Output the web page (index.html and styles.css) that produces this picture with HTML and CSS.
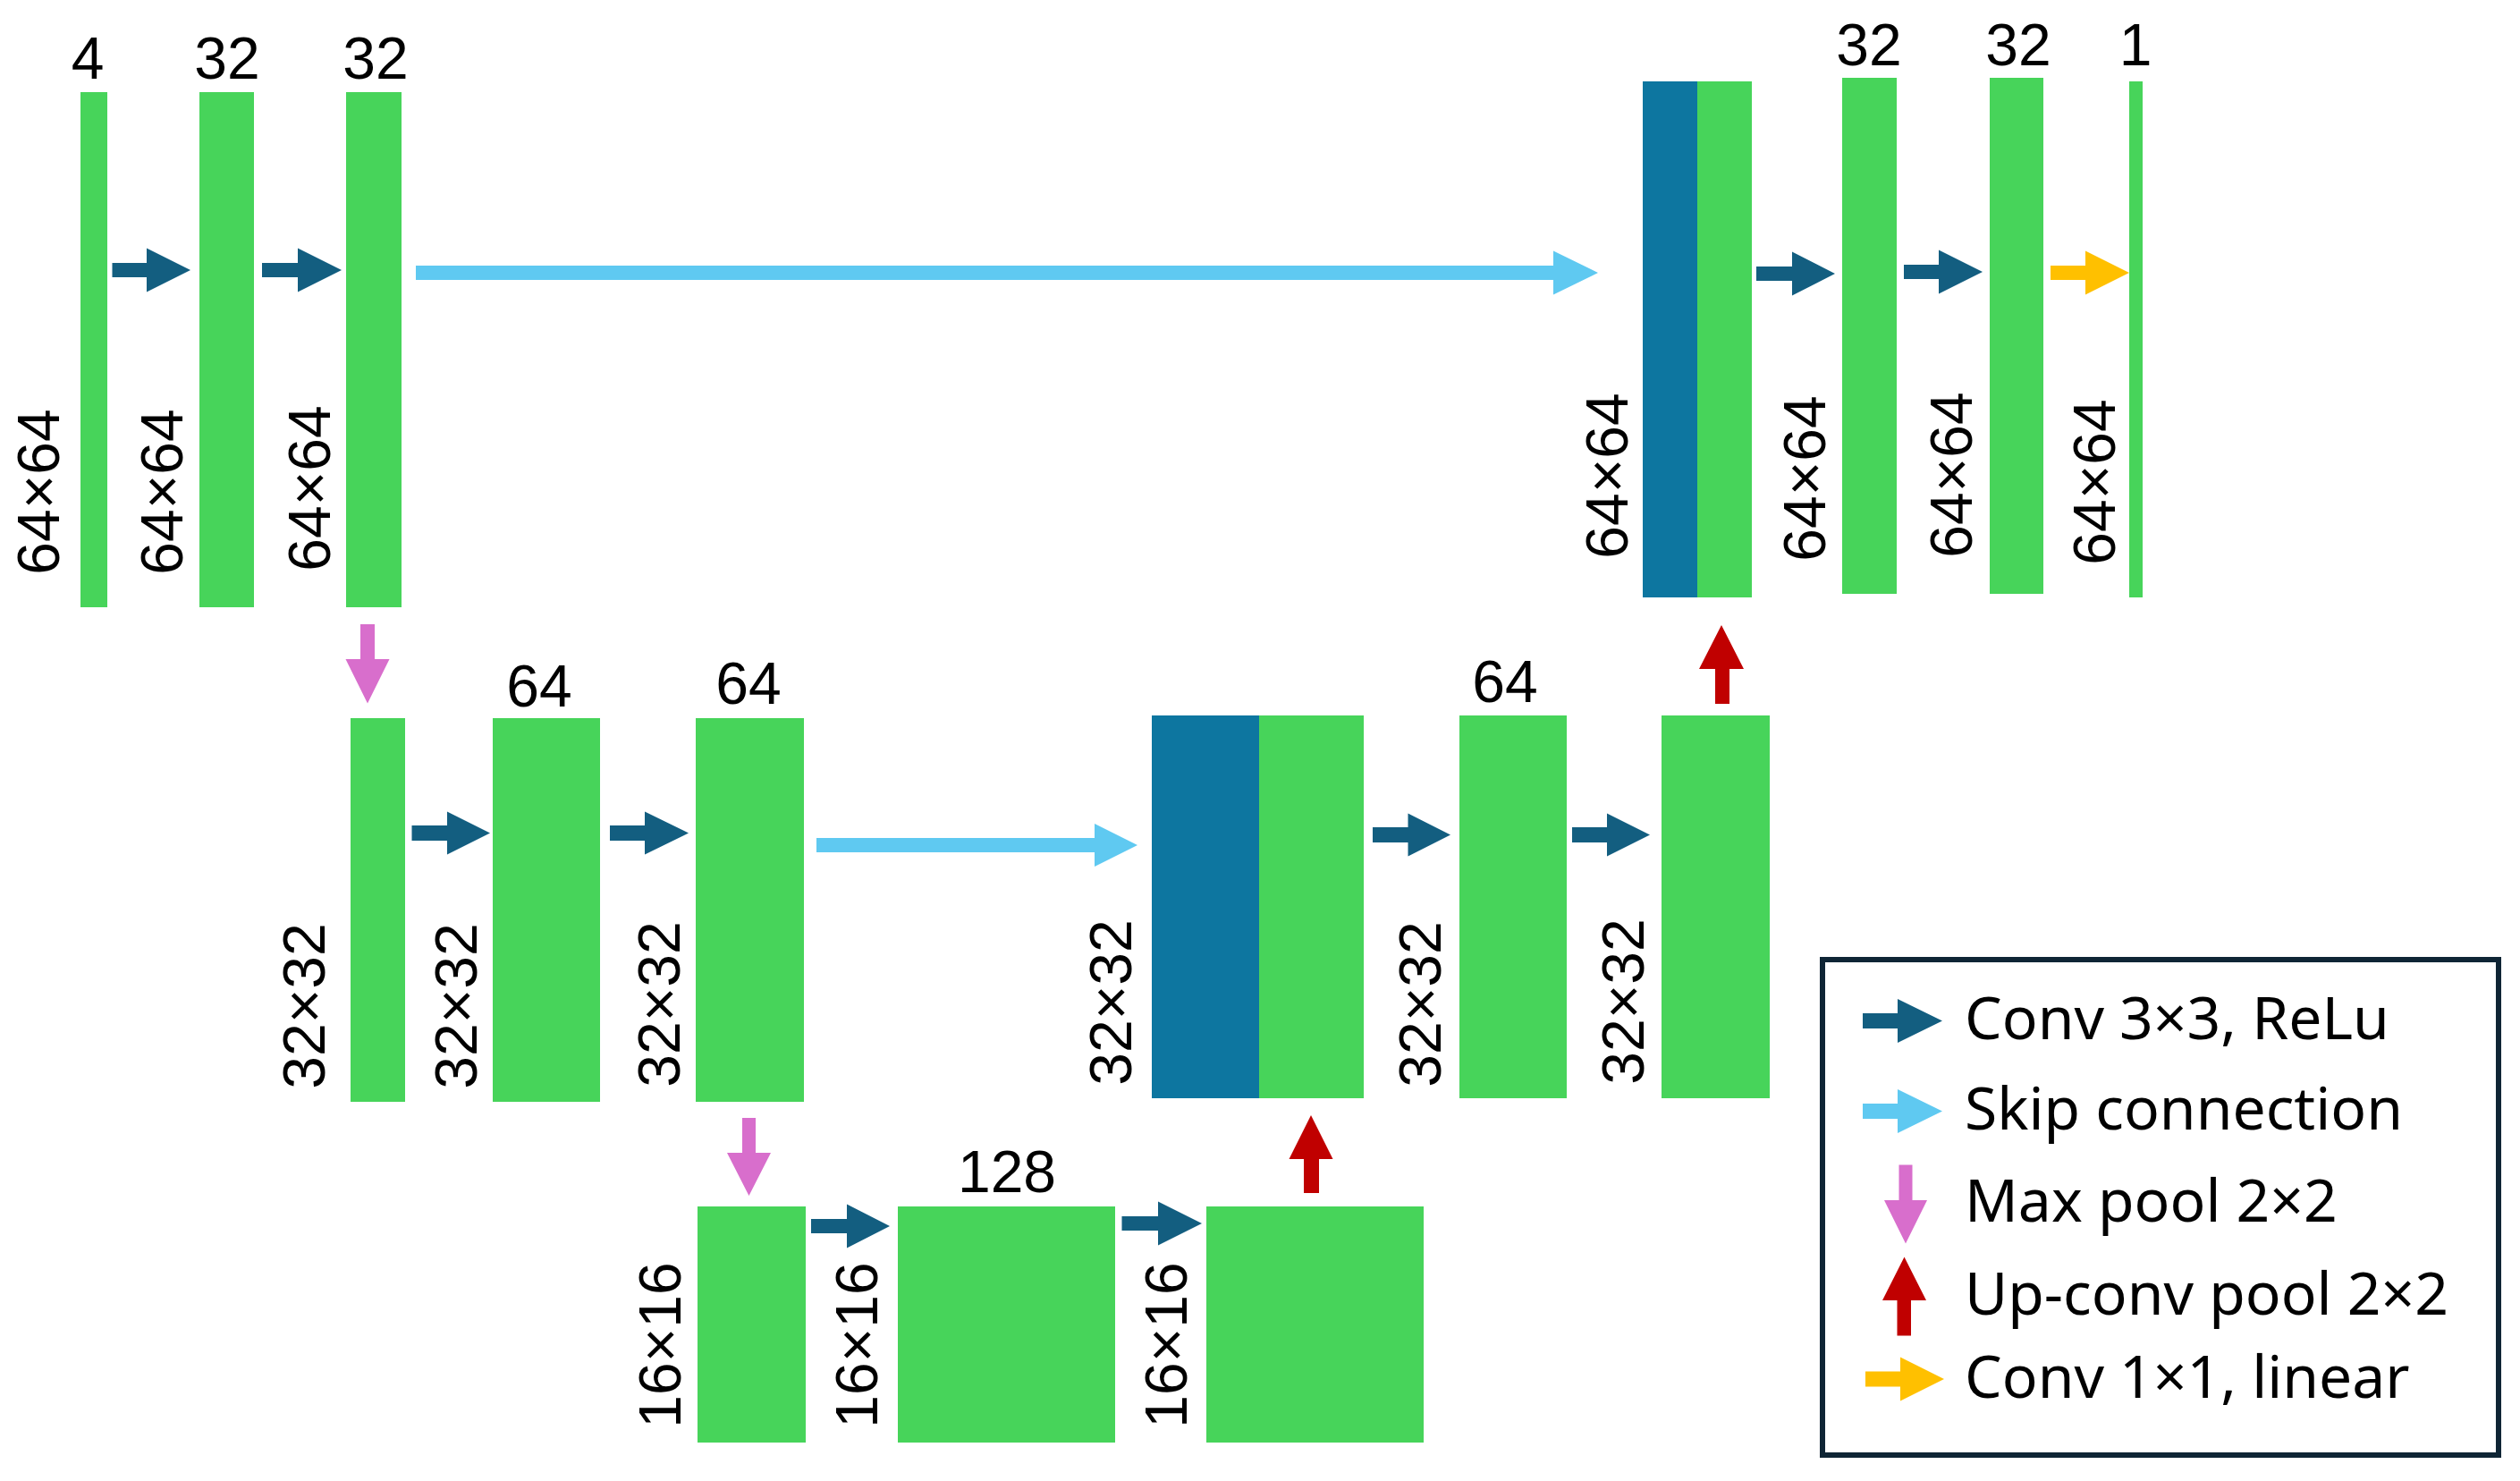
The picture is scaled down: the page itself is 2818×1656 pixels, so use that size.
FILE: index.html
```html
<!DOCTYPE html>
<html lang="en">
<head>
<meta charset="utf-8">
<title>U-Net architecture</title>
<link rel="stylesheet" href="styles.css">
</head>
<body>
<div class="canvas">
  <svg class="diagram" width="2818" height="1656" viewBox="0 0 2818 1656" xmlns="http://www.w3.org/2000/svg">
    <!-- level 1 encoder -->
    <rect class="g" x="90" y="103" width="30" height="576"/>
    <rect class="g" x="223" y="103" width="61" height="576"/>
    <rect class="g" x="387" y="103" width="62" height="576"/>
    <text class="lbl" x="98" y="88">4</text>
    <text class="lbl" x="254" y="88">32</text>
    <text class="lbl" x="420" y="88">32</text>
    <text class="lbl" transform="translate(66 550) rotate(-90)">64×64</text>
    <text class="lbl" transform="translate(204 550) rotate(-90)">64×64</text>
    <text class="lbl" transform="translate(369 546) rotate(-90)">64×64</text>
    <path class="conv" d="M125.5 294 H164 V277.5 L213 302 L164 326.5 V310 H125.5 Z"/>
    <path class="conv" d="M293 294 H333 V277.5 L382 302 L333 326.5 V310 H293 Z"/>
    <path class="skip" d="M465 297 H1737 V280.5 L1787 305 L1737 329.5 V313 H465 Z"/>

    <!-- level 1 decoder -->
    <rect class="b" x="1837" y="91" width="61" height="577"/>
    <rect class="g" x="1898" y="91" width="61" height="577"/>
    <rect class="g" x="2060" y="87" width="61" height="577"/>
    <rect class="g" x="2225" y="87" width="60" height="577"/>
    <rect class="g" x="2381" y="91" width="15" height="577"/>
    <text class="lbl" x="2090" y="73">32</text>
    <text class="lbl" x="2257" y="73">32</text>
    <text class="lbl" x="2388" y="73">1</text>
    <text class="lbl" transform="translate(1820 532) rotate(-90)">64×64</text>
    <text class="lbl" transform="translate(2041 535) rotate(-90)">64×64</text>
    <text class="lbl" transform="translate(2205 531) rotate(-90)">64×64</text>
    <text class="lbl" transform="translate(2365 539) rotate(-90)">64×64</text>
    <path class="conv" d="M1964 298 H2004 V281.5 L2052 306 L2004 330.5 V314 H1964 Z"/>
    <path class="conv" d="M2129 296 H2168 V279.5 L2217 304 L2168 328.5 V312 H2129 Z"/>
    <path class="lin" d="M2293 297 H2332 V280.5 L2381 305 L2332 329.5 V313 H2293 Z"/>
    <path class="up" d="M1918 787 V748 H1900 L1925 699 L1950 748 H1934 V787 Z"/>

    <!-- level 2 encoder -->
    <path class="pool" d="M403 698 V737 H386.5 L411 786.5 L435.5 737 H419 V698 Z"/>
    <rect class="g" x="392" y="803" width="61" height="429"/>
    <rect class="g" x="551" y="803" width="120" height="429"/>
    <rect class="g" x="778" y="803" width="121" height="429"/>
    <text class="lbl" x="603" y="790">64</text>
    <text class="lbl" x="837" y="787">64</text>
    <text class="lbl" transform="translate(363 1125) rotate(-90)">32×32</text>
    <text class="lbl" transform="translate(533 1125) rotate(-90)">32×32</text>
    <text class="lbl" transform="translate(760 1123) rotate(-90)">32×32</text>
    <path class="conv" d="M460.5 923 H500 V907.5 L548 931.5 L500 955.5 V940 H460.5 Z"/>
    <path class="conv" d="M682 923 H721 V907.5 L770 931.5 L721 955.5 V940 H682 Z"/>
    <path class="skip" d="M913 937 H1224 V921 L1272 945 L1224 969 V953 H913 Z"/>

    <!-- level 2 decoder -->
    <rect class="b" x="1288" y="800" width="120" height="428"/>
    <rect class="g" x="1408" y="800" width="117" height="428"/>
    <rect class="g" x="1632" y="800" width="120" height="428"/>
    <rect class="g" x="1858" y="800" width="121" height="428"/>
    <text class="lbl" x="1683" y="785">64</text>
    <text class="lbl" transform="translate(1265 1121) rotate(-90)">32×32</text>
    <text class="lbl" transform="translate(1611 1123) rotate(-90)">32×32</text>
    <text class="lbl" transform="translate(1838 1120) rotate(-90)">32×32</text>
    <path class="conv" d="M1535 925 H1574.5 V909.5 L1622 933.5 L1574.5 957.5 V942 H1535 Z"/>
    <path class="conv" d="M1758 925 H1797 V909.5 L1845 933.5 L1797 957.5 V942 H1758 Z"/>
    <path class="up" d="M1458 1334 V1296 H1441.5 L1466 1247 L1490.5 1296 H1475 V1334 Z"/>

    <!-- level 3 -->
    <path class="pool" d="M830 1250 V1289 H813 L837.5 1337 L862 1289 H845 V1250 Z"/>
    <rect class="g" x="780" y="1349" width="121" height="264"/>
    <rect class="g" x="1004" y="1349" width="243" height="264"/>
    <rect class="g" x="1349" y="1349" width="243" height="264"/>
    <text class="lbl" x="1126" y="1333">128</text>
    <text class="lbl" transform="translate(761 1504) rotate(-90)">16×16</text>
    <text class="lbl" transform="translate(981 1504) rotate(-90)">16×16</text>
    <text class="lbl" transform="translate(1327 1504) rotate(-90)">16×16</text>
    <path class="conv" d="M907 1363 H947 V1346.5 L995 1371 L947 1395.5 V1379 H907 Z"/>
    <path class="conv" d="M1254.5 1360 H1295 V1343.5 L1344 1368 L1295 1392.5 V1376 H1254.5 Z"/>
  </svg>

  <div class="legend">
    <div class="row">
      <svg class="icon" width="92" height="100" viewBox="0 0 92 100"><path class="conv" d="M0 47 H39 V31 L89 55.5 L39 80 V64 H0 Z"/></svg>
      <span class="txt">Conv 3×3, ReLu</span>
    </div>
    <div class="row">
      <svg class="icon" width="92" height="100" viewBox="0 0 92 100"><path class="skip" d="M0 47 H39 V31 L89 55.5 L39 80 V64 H0 Z"/></svg>
      <span class="txt">Skip connection</span>
    </div>
    <div class="row">
      <svg class="icon" width="92" height="100" viewBox="0 0 92 100"><path class="pool" d="M40.5 12.5 V52 H24 L48 100.5 L72 52 H55.5 V12.5 Z"/></svg>
      <span class="txt">Max pool 2×2</span>
    </div>
    <div class="row">
      <svg class="icon" width="92" height="100" viewBox="0 0 92 100"><path class="up" d="M38.5 99.5 V60 H22 L46.5 11.5 L71 60 H54 V99.5 Z"/></svg>
      <span class="txt">Up-conv pool 2×2</span>
    </div>
    <div class="row">
      <svg class="icon" width="92" height="100" viewBox="0 0 92 100"><path class="lin" d="M3 46.5 H42 V30.5 L91 55 L42 79.5 V63.5 H3 Z"/></svg>
      <span class="txt">Conv 1×1, linear</span>
    </div>
  </div>
</div>
</body>
</html>
```

FILE: styles.css
```css
html, body {
  margin: 0;
  padding: 0;
  background: #ffffff;
}

.canvas {
  position: relative;
  width: 2818px;
  height: 1656px;
  overflow: hidden;
  background: #ffffff;
}

.diagram {
  display: block;
}

.g { fill: #47d45a; }
.b { fill: #0d76a0; }
.conv { fill: #135e80; }
.skip { fill: #5fc9f1; }
.pool { fill: #d86ecc; }
.up { fill: #c00000; }
.lin { fill: #ffc000; }

.lbl {
  font-family: "Liberation Sans", Arial, sans-serif;
  font-size: 66px;
  fill: #000000;
  text-anchor: middle;
}

.legend {
  position: absolute;
  left: 2035px;
  top: 1070px;
  width: 762px;
  height: 560px;
  box-sizing: border-box;
  border: 6px solid #0f2535;
  background: #ffffff;
  padding: 10px 0 0 42px;
  display: flex;
  flex-direction: column;
}

.row {
  display: flex;
  align-items: flex-start;
  height: 100px;
}

.row:nth-child(2) { margin-top: 1px; }
.row:nth-child(3) { margin-top: 3px; }
.row:nth-child(4) { margin-top: 4px; }
.row:nth-child(5) { margin-top: -7px; }

.icon {
  flex: none;
  display: block;
  overflow: visible;
}

.txt {
  margin-left: 22px;
  font-family: "Noto Sans", "Open Sans", sans-serif;
  font-size: 66px;
  line-height: 100px;
  color: #000000;
  white-space: nowrap;
}
```
